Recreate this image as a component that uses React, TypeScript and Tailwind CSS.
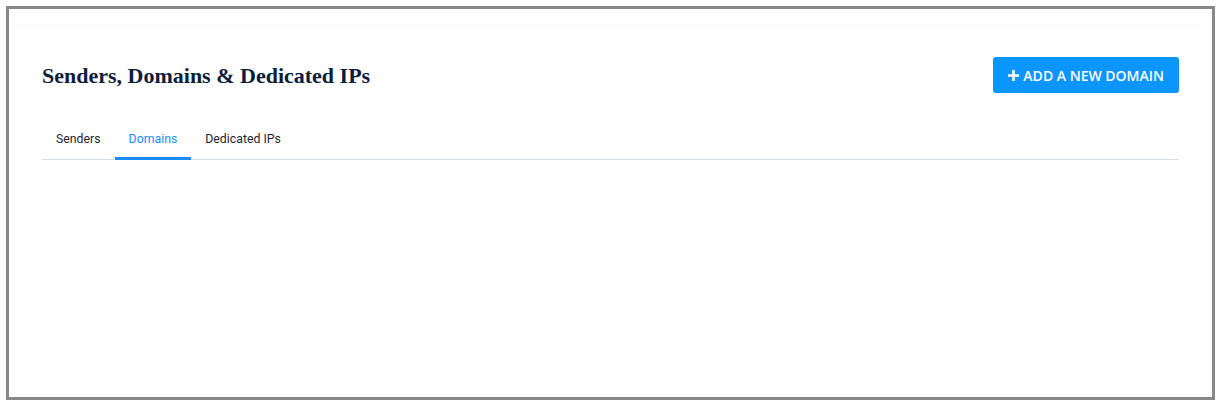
import { useState } from "react";

const tabs = ["Senders", "Domains", "Dedicated IPs"];

function PlusIcon() {
    return (
        <svg viewBox="0 0 12 12" className="h-[11px] w-[11px]" fill="currentColor">
            <path d="M4.6 0h2.8v4.6H12v2.8H7.4V12H4.6V7.4H0V4.6h4.6z" />
        </svg>
    );
}

export default function App() {
    const [active, setActive] = useState("Domains");

    return (
        <div className="h-[412px] w-[1224px] bg-white p-[6px]">
            <div className="h-[394px] w-[1209px] border-[3px] border-[#888888] bg-white">
                <div className="mx-[10px] mt-[16px] h-px bg-[#f7f7f7]" />
                <div className="px-[33px] pt-[31px]">
                    <div className="flex items-center justify-between">
                        <h1 className="font-['Liberation_Serif',serif] text-[22px] font-bold text-[#0e1d3c]">
                            Senders, Domains &amp; Dedicated IPs
                        </h1>
                        <button className="flex h-[36px] items-center gap-[4px] rounded-[3px] bg-[#0a95ff] px-[15px] font-['Open_Sans',sans-serif] text-[14px] font-semibold text-white">
                            <PlusIcon />
                            ADD A NEW DOMAIN
                        </button>
                    </div>
                    <div className="mt-[33px] flex border-b border-[#d5dee9]">
                        {tabs.map((t) => (
                            <button
                                key={t}
                                onClick={() => setActive(t)}
                                className={
                                    "-mb-px border-b-[3px] px-[14px] pb-[9px] pt-[4px] font-['Roboto',sans-serif] text-[12.3px] " +
                                    (active === t
                                        ? "border-[#1a8cff] text-[#1a8cff]"
                                        : "border-transparent text-[#1f2530]")
                                }
                            >
                                {t}
                            </button>
                        ))}
                    </div>
                </div>
            </div>
        </div>
    );
}
